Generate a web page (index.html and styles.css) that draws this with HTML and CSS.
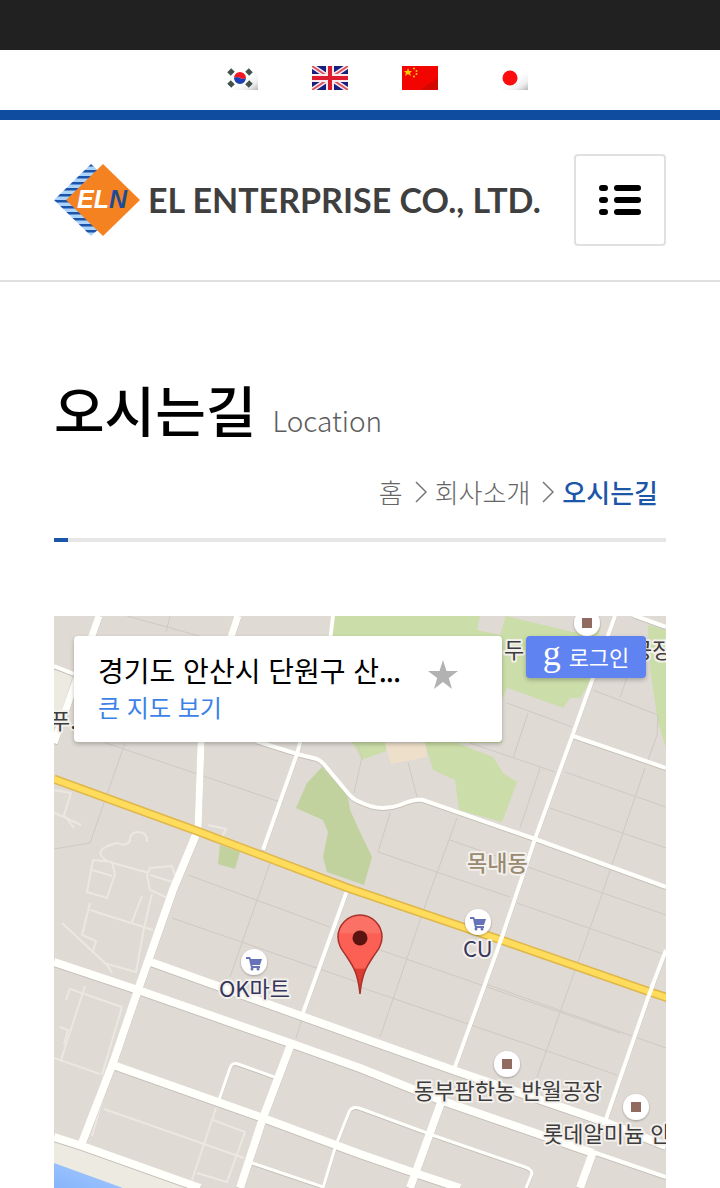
FILE: index.html
```html
<!DOCTYPE html>
<html lang="ko">
<head>
<meta charset="utf-8">
<meta name="viewport" content="width=device-width, initial-scale=1">
<title>오시는길 - EL ENTERPRISE CO., LTD.</title>
<link rel="stylesheet" href="styles.css">
</head>
<body>
<div class="topbar"></div>
<nav class="languages" aria-label="Language">
  <a href="#ko" aria-label="한국어"><svg class="flag" viewBox="0 0 36 24">
    <defs>
      <linearGradient id="shade" x1="0" y1="0" x2="1" y2="1"><stop offset=".6" stop-color="#fff"/><stop offset=".82" stop-color="#eee"/><stop offset="1" stop-color="#b8b8b8"/></linearGradient>
      <filter id="soft" x="-20%" y="-20%" width="140%" height="140%"><feGaussianBlur stdDeviation=".7"/></filter>
    </defs>
    <path fill="url(#shade)" d="M0 0h36v24H0z"/>
    <g filter="url(#soft)">
      <path fill="#f01522" d="M12 12a6 6 0 0 1 12 0q-3 2-6 0t-6 0z"/>
      <path fill="#1c40b4" d="M12 12q3-2 6 0t6 0a6 6 0 0 1-12 0z"/>
      <path stroke="#43524f" stroke-width="5" d="m7 8 4-4M25 4l4 4M7 16l4 4m14 0 4-4"/>
    </g>
  </svg></a>
  <a href="#en" aria-label="English"><svg class="flag" viewBox="0 0 36 24">
    <path fill="#17207e" d="M0 0h36v24H0z"/>
    <g filter="url(#soft)">
      <path stroke="#f4eaf0" stroke-width="5" d="m0 0 36 24M36 0 0 24"/>
      <path stroke="#e0525c" stroke-width="2" d="m0 0 36 24M36 0 0 24"/>
      <path stroke="#fbe9ec" stroke-width="8" d="M18 0v24M0 12h36"/>
      <path stroke="#dc1c2e" stroke-width="4" d="M18 0v24M0 12h36"/>
    </g>
  </svg></a>
  <a href="#zh" aria-label="中文"><svg class="flag" viewBox="0 0 36 24">
    <path fill="#f20500" d="M0 0h36v24H0z"/>
    <path fill="#b60a00" opacity=".5" d="M36 12v12H18z" filter="url(#soft)"/>
    <g fill="#ffca00" filter="url(#soft)">
      <path d="m6 2 1.200 3H10L8 7l1 3-3-2-3 2 1-3-2-2h3z"/>
      <circle cx="12" cy="2.500" r="1"/><circle cx="14.500" cy="5" r="1"/><circle cx="14.500" cy="8" r="1"/><circle cx="12" cy="10.500" r="1"/>
    </g>
  </svg></a>
  <a href="#ja" aria-label="日本語"><svg class="flag" viewBox="0 0 36 24">
    <path fill="url(#shade)" d="M0 0h36v24H0z"/>
    <circle cx="18" cy="12" r="7.500" fill="#fb0d10" filter="url(#soft)"/>
  </svg></a>
</nav>

<header class="header">
  <a class="logo" href="#home" aria-label="EL ENTERPRISE CO., LTD.">
    <svg class="logo-mark" viewBox="0 0 86 72">
      <defs><pattern id="stripes" width="86" height="6" patternUnits="userSpaceOnUse"><path fill="#abd3fb" d="M0 0h86v6H0z"/><path fill="#1c54ab" d="M0 0h86v2.500H0z"/></pattern></defs>
      <path fill="url(#stripes)" d="M37 0 0 36l37 36 12-11V11z"/>
      <path fill="#f58220" d="M49 0 12 36l37 36 37-36z"/>
      <text class="logo-initials" x="23" y="44">EL<tspan fill="#1d4b96">N</tspan></text>
    </svg>
    <span class="logo-name">EL ENTERPRISE CO., LTD.</span>
  </a>
  <button class="menu-button" type="button" aria-label="메뉴">
    <svg viewBox="0 0 42 30" width="42" height="30"><g stroke="#000" stroke-width="6" stroke-linecap="round"><path d="M3 3h3M18 3h21M3 15h3M18 15h21M3 27h3M18 27h21"/></g></svg>
  </button>
</header>

<main class="content">
  <div class="page-title">
    <h1>오시는길</h1>
    <span class="subtitle">Location</span>
  </div>
  <nav class="breadcrumb" aria-label="현재 위치">
    <a href="#home">홈</a>
    <svg viewBox="0 0 12 22"><path d="m1 1 10 10L1 21"/></svg>
    <a href="#company">회사소개</a>
    <svg viewBox="0 0 12 22"><path d="m1 1 10 10L1 21"/></svg>
    <strong>오시는길</strong>
  </nav>
  <div class="rule"></div>

  <section class="map" aria-label="지도">
    <svg class="map-canvas" viewBox="54 616 612 572">
      <defs>
        <linearGradient id="water" x1="0" y1="1" x2="1" y2="0"><stop stop-color="#86b4fb"/><stop offset="1" stop-color="#a8cbff"/></linearGradient>
        <linearGradient id="pin" x1="0" y1="0" x2="0" y2="1"><stop stop-color="#fb7166"/><stop offset=".22" stop-color="#fb7166"/><stop offset=".24" stop-color="#fc5f54"/><stop offset=".67" stop-color="#fc5f54"/><stop offset=".69" stop-color="#dc3c32"/></linearGradient>
        <filter id="drop" x="-30%" y="-30%" width="160%" height="170%"><feDropShadow dx="0" dy="1" stdDeviation="1" flood-opacity=".3"/></filter>
        <g id="place"><circle r="13" fill="#fff" filter="url(#drop)"/><path fill="#916a60" d="M-5-5H5V5H-5z"/></g>
        <g id="shop"><circle r="13" fill="#fff" filter="url(#drop)"/><path fill="#6673b8" d="M-8-5h4l1 2H8L6 3h-8l1 1h7v2h-9L-5-3h-3z"/><circle cx="-2" cy="7" r="1.500" fill="#6673b8"/><circle cx="4" cy="7" r="1.500" fill="#6673b8"/></g>
        <g id="roads">
          <path stroke-width="7" d="M99 616 54 743M238 616l-10 30-25 70-2 27-3 87"/>
          <path stroke-width="8" d="m198 830-25 60-35 100-25 73-31 80M148 961l212 76 93 33 152 52 61 24M54 962l84 28 152 53 70 25 80 32 153 53M113 1065l150 53 97 36 55 19 45 15M291 1044l-28 74-23 70M442 1100l-32 88M593 1152l-13 36M54 1137l28 9 118 42"/>
          <path stroke-width="4" d="M54 666l20 8M333 616l-3 25-30 102-3 11-34 96M256 741l41 13 20 5q6 3 10 9l20 24q6 8 13 10 12 6 23 6 9 0 17-3 14-6 23-5l112 39 131 48M615 616l-42 118-38 105-34 101-46 127M573 736l93 32M633 615l33 12M666 950l-16 42-45 130M348 888l-45 125M593 1152l73 25"/>
          <path stroke-width="3" d="m219 1100 11-32q2-6 8-4l39 14M323 1188l13-43 13-33q3-6 10-4l76 28 90 31q9 3 6 9l-5 12M252 1163l71 24"/>
        </g>
      </defs>
      <path fill="#dfdad4" d="M54 616h612v572H54z"/>
      <path fill="#edeae1" d="m54 670 19 5-11 35-8 10zM54 1141l141 47H54z"/>
      <path fill="url(#water)" d="m54 1163 69 25H54z"/>
      <path fill="#cbdda8" d="M333 616h147l-3 14 23 5 6-19 67 16 27-5-8 51-12 20h-10l-7 10-56-20-5 12v43h-45l36 14 10 16 14 9-15 40-43-12-4-30-22-10-8-27-43-14-30 14V640h-20zM648 625l18 5v118l-8-25-8-56z"/>
      <path fill="#cbdda8" d="m350 738 12 22 24-9v-13z"/>
      <path fill="#dfdad4" d="m510 616 63 16 30-5 7-11zM507 688l56 20-10 8-51-16z"/>
      <path fill="#eedfca" d="m385 743 6 21 36-7-2-14z"/>
      <path fill="#c1d29e" d="m322 767-15 16-11 25 27 12 5 12-5 25 4 15 37 13 8-28-12-25-10-22-2-13-11-14zM220 845l-2 19 17 5 5-17z"/>
      <g class="parcels">
        <path d="m103 742 180 61M125 743l-35 100-36 6M188 875l142 52M270 863l-40 114M172 918l188 65M127 616l76 21M170 616l-4 16M303 1016l-7 22M358 745l4 12-8 36"/>
        <path d="m507 703 65 24M528 713l-15 45M470 743l85 29M540 768l-20 60M593 690l65 25-1 20-9 25M627 677l-7 21M565 772l101 35M550 808l116 40M645 768l-45 132-63 177M450 840l216 75M390 813l-12 39 132 45M457 818l-30 82-47 137M408 762l9 35M517 903l149 52M360 943l260 90M360 987l257 88M483 983l183 65"/>
      </g>
      <g class="footpaths">
        <path d="M147 842q1-10-10-10-8 1-7 9-5 6-12 2-16 3-18 10 3 8 13 10l36 10M93 860l19 2 3 12-8 24-20-6zM92 870l20 6M150 868l22-2 4 12-8 20-18-8-3-15zM150 875l23 7M54 790l17 3-7 22 10 13M54 813l10 4 17 8M62 923l45 42 5 8M90 903l-8 32 14 6-3 10M90 910l63 20M142 896l-10 26M152 894l-8 34-8 44-29-8M70 989l52 18-20 68M85 986l-24 74M70 988l-4 12M60 1027l8 3-4 14M100 1074l-46-16M104 1109l140 49M216 1108l-24 72M213 1120l32 12-18 50-30-9M110 1074l-18 62M208 825l18 4-5 10"/>
      </g>
      <use href="#roads" stroke="#c4bfb8" fill="none" transform="translate(0 1)"/>
      <use href="#roads" stroke="#fffffc" fill="none"/>
      <path class="highway-edge" d="m54 779 143 52 151 57 153 52 149 52 18 6"/>
      <path class="highway" d="m54 779 143 52 151 57 153 52 149 52 18 6"/>
      <path stroke="#fffffc" stroke-width="4" d="m503 934-4 11M653 984l-5 14"/>
      <use href="#place" x="587" y="623"/>
      <use href="#place" x="507" y="1064"/>
      <use href="#place" x="636" y="1107"/>
      <use href="#shop" x="254" y="962"/>
      <use href="#shop" x="478" y="922"/>
      <g class="labels">
        <text x="50" y="729">푸..</text>
        <text x="504" y="658">두</text>
        <text x="632" y="658">공장</text>
        <text class="district" x="467" y="871">목내동</text>
        <text class="store" x="219" y="997">OK마트</text>
        <text class="store" x="463" y="957">CU</text>
        <text x="414" y="1099">동부팜한농 반월공장</text>
        <text x="543" y="1142">롯데알미늄 안</text>
      </g>
      <path fill="url(#pin)" stroke="#a93029" stroke-width="1.500" d="M360 994c-2-21-7-28-13-37-5-7-9-12-9-20a22 22 0 0 1 44 0c0 8-4 13-9 20-6 9-11 16-13 37z"/>
      <circle cx="360" cy="938" r="7.500" fill="#5c1410"/>
    </svg>
    <div class="map-overlay">
      <div class="place-card">
        <div>
          <div class="place-name">경기도 안산시 단원구 산<span class="dots">...</span></div>
          <a class="larger-map" href="#map">큰 지도 보기</a>
        </div>
        <button class="star" type="button" aria-label="저장"><svg viewBox="0 0 30 29" width="30" height="29"><path fill="#b2b2b2" d="m15 0 3.500 11H30l-9.200 7L24 29l-9-7-9 7 3.200-11L0 11h11.500z"/></svg></button>
      </div>
      <button class="login" type="button"><span class="g">g</span>로그인</button>
    </div>
  </section>
</main>
</body>
</html>
```
FILE: styles.css
```css
* { box-sizing: border-box; }

body {
  margin: 0;
  background: #fff;
  color: #000;
  font-family: "Noto Sans CJK KR", sans-serif;
}

a { color: inherit; text-decoration: none; }

button { margin: 0; padding: 0; border: 0; background: none; font: inherit; cursor: pointer; }

svg { display: block; }

.topbar { height: 50px; background: #212121; }

.languages {
  display: flex;
  justify-content: center;
  gap: 54px;
  padding: 16px 0 20px 30px;
  border-bottom: 10px solid #0f4c9f;
}

.flag { width: 36px; height: 24px; }

.header {
  display: flex;
  align-items: center;
  justify-content: space-between;
  padding: 34px 54px;
  border-bottom: 2px solid #e0e0e0;
}

.logo { display: flex; align-items: center; gap: 8px; }

.logo-mark { flex: none; width: 86px; height: 72px; }

.logo-initials { fill: #fff; font: italic bold 25px "Liberation Sans", sans-serif; }

.logo-name {
  color: #3f3f3f;
  font-family: Lato, sans-serif;
  font-size: 34px;
  font-weight: 700;
  line-height: 48px;
  white-space: nowrap;
}

.menu-button {
  display: flex;
  flex: none;
  align-items: center;
  justify-content: center;
  width: 92px;
  height: 92px;
  border: 2px solid #e0e0e0;
  border-radius: 4px;
}

.content { padding: 86px 54px 0; }

.page-title { display: flex; align-items: baseline; gap: 16px; }

.page-title h1 { margin: 0; font-size: 55px; font-weight: 500; line-height: 80px; }

.subtitle { color: #5c5c5c; font-size: 28px; font-weight: 300; line-height: 40px; }

.breadcrumb {
  display: flex;
  align-items: center;
  justify-content: flex-end;
  gap: 8px;
  padding: 24px 8px 0 0;
  color: #666;
  font-size: 26px;
  font-weight: 300;
  line-height: 40px;
}

.breadcrumb svg { width: 12px; height: 22px; margin-left: 4px; fill: none; stroke: #777; stroke-width: 1.5; }

.breadcrumb strong { color: #1c56a8; font-weight: 500; }

.rule {
  height: 4px;
  margin: 26px 0 74px;
  background: linear-gradient(to right, #1c56a8 14px, #e6e6e6 14px);
}

.map { position: relative; overflow: hidden; }

.map-canvas { width: 100%; height: auto; }

.parcels { fill: none; stroke: #cfc9c3; stroke-width: 1; }

.footpaths { fill: none; stroke: #ebe8e1; stroke-width: 2; }

.highway-edge { fill: none; stroke: #dfb74a; stroke-width: 9; }

.highway { fill: none; stroke: #ffdc5c; stroke-width: 6; }

.labels {
  fill: #3c3c3c;
  stroke: #f3f0ec;
  stroke-width: 4;
  stroke-linejoin: round;
  paint-order: stroke;
  font-size: 22px;
}

.labels .district { fill: #998a70; font-weight: 500; }

.labels .store { fill: #35355c; }

.map-overlay {
  position: absolute;
  inset: 20px 20px auto;
  display: flex;
  align-items: flex-start;
  justify-content: space-between;
}

.place-card {
  display: flex;
  align-items: flex-start;
  justify-content: space-between;
  width: 428px;
  padding: 15px 44px 17px 24px;
  border-radius: 4px;
  background: #fff;
  box-shadow: 0 2px 4px rgba(0, 0, 0, 0.25);
}

.place-name { font-size: 28px; line-height: 38px; white-space: nowrap; }

.dots { font-size: 22px; font-weight: 700; line-height: 22px; }

.larger-map { display: block; color: #3b82e8; font-size: 24px; line-height: 36px; }

.star { padding-top: 9px; }

.login {
  display: flex;
  align-items: center;
  justify-content: center;
  gap: 8px;
  width: 120px;
  height: 42px;
  padding-bottom: 3px;
  border-radius: 4px;
  background: #5f83f0;
  box-shadow: 0 2px 4px rgba(0, 0, 0, 0.25);
  color: #fff;
  font-size: 22px;
}

.login .g { font: 36px/24px "Liberation Serif", serif; padding-bottom: 6px; }
```
